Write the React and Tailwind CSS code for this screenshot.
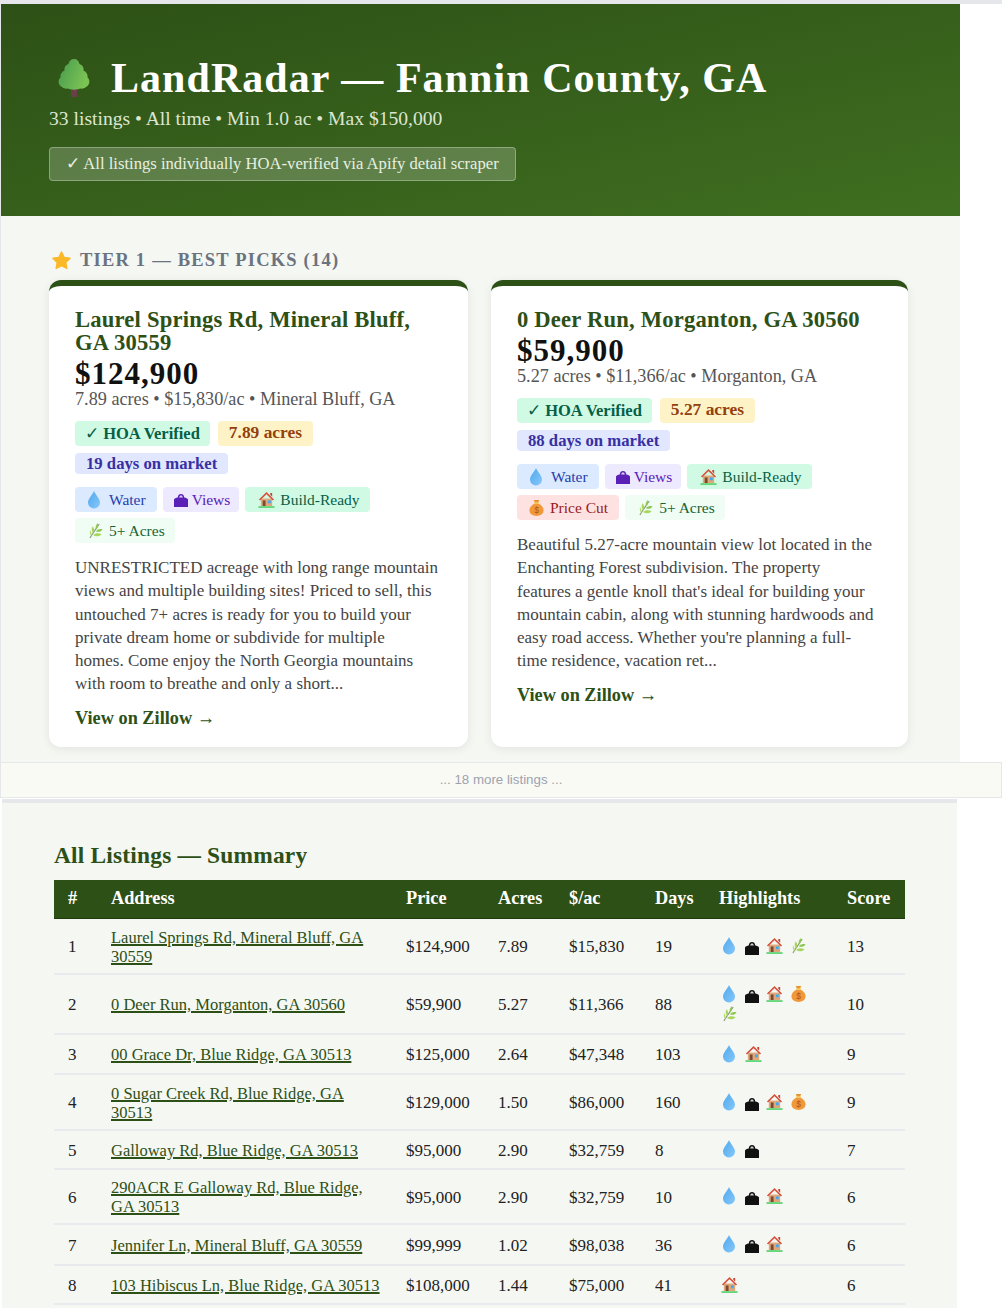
import React from 'react';

const Tree = () => (
  <svg viewBox="0 0 32 38" className="w-[32px] h-[38px] shrink-0">
    <defs>
      <linearGradient id="treeFill" x1="0" y1="0" x2="1" y2="0.4">
        <stop offset="0" stopColor="#459a4e" />
        <stop offset="1" stopColor="#7cc354" />
      </linearGradient>
    </defs>
    <rect x="13" y="30" width="6" height="8" fill="#6a4048" />
    <path d="M16 0c3 0 5 2 5.500 5 3 1 4.500 3.500 4 6.500 3 1.500 4.500 4 4 7 2.500 2 2.500 6 0 8.500-2 2-5 3-7.500 2.500-2 1.500-10 1.500-12 0-2.500.5-5.500-.5-7.500-2.500-2.500-2.500-2.500-6.500 0-8.500-.5-3 1-5.500 4-7-.5-3 1-5.500 4-6.500C11 2 13 0 16 0z" fill="url(#treeFill)" />
  </svg>
);

const Star = () => (
  <svg viewBox="0 0 20 20" className="w-[19px] h-[19px] shrink-0">
    <path d="M10 1l2.800 5.800 6.200.9-4.500 4.400 1.100 6.300L10 15.400l-5.600 3 1.100-6.300L1 7.700l6.200-.9z" fill="#fbb828" stroke="#fbb828" strokeWidth="1.500" strokeLinejoin="round" />
  </svg>
);

const Drop = () => (
  <svg viewBox="0 0 14 18" className="w-[14px] h-[18px] shrink-0">
    <defs>
      <linearGradient id="dropFill" x1="0" y1="0" x2="1" y2="1">
        <stop offset="0" stopColor="#4fa8ec" />
        <stop offset="1" stopColor="#86c8fb" />
      </linearGradient>
    </defs>
    <path d="M7 0c1 3 6 7.500 6 11.500a6 6 0 0 1-12 0C1 7.500 6 3 7 0z" fill="url(#dropFill)" />
  </svg>
);

const Bag = () => (
  <svg viewBox="0 0 17 15" className="w-[16px] h-[14px] shrink-0" fill="currentColor">
    <path d="M1 7C1.500 5.500 3 5 5 4.700 5.500 2 6.500 1 8.500 1s3 1 3.500 3.700c2 .3 3.500.8 4 2.300v8H1z" />
    <path d="M6.500 4.800c.3-1.500 1-2.200 2-2.200s1.700.7 2 2.200z" fill="#ffffff" opacity=".8" />
  </svg>
);

const House = () => (
  <svg viewBox="0 0 18 18" className="w-[17px] h-[17px] shrink-0">
    <rect x="3" y="8" width="12" height="8" fill="#e0a878" />
    <path d="M9 1L1 9l1.200 1L9 3.500l6.800 6.500L17 9z" fill="#d8503c" />
    <path d="M13 2h2v4l-2-2z" fill="#c24836" />
    <rect x="5" y="10" width="3" height="6" fill="#7a4a34" />
    <rect x="10.500" y="10" width="3" height="3" fill="#3fa9f5" />
    <rect x="0.500" y="16" width="17" height="2" fill="#66d67a" />
  </svg>
);

const MoneyBag = () => (
  <svg viewBox="0 0 16 18" className="w-[15px] h-[17px] shrink-0">
    <path d="M5 1h6l-1.500 3h-3z" fill="#e8942c" />
    <rect x="5.500" y="3.500" width="5" height="1.500" fill="#f6c84c" />
    <path d="M5.500 5h5c3 1.500 5 4 5 7 0 4-3.500 6-7.500 6S.5 16 .5 12c0-3 2-5.500 5-7z" fill="#f0983a" />
    <text x="8" y="15" textAnchor="middle" fontSize="9" fontFamily="Liberation Sans, sans-serif" fill="#a85a1c">$</text>
  </svg>
);

const Herb = () => (
  <svg viewBox="0 0 16 18" className="w-[15px] h-[17px] shrink-0" fill="none">
    <path d="M2 17C5 12 8 8 12 2" stroke="#87966f" strokeWidth="1.100" />
    <path d="M5.500 12C3.500 9.500 3.500 7 5 4.500c2 2.500 2 5 .5 7.500z" fill="#a6d65c" />
    <path d="M8.500 8C7.500 5.500 8.500 3 10.500 1c.8 2.500 0 5-2 7z" fill="#8cc850" />
    <path d="M5.500 14c2.500-2.500 5.500-2.500 9-1-2.500 2.500-5.500 3-9 1z" fill="#a6d65c" />
    <path d="M8.500 10c1.500-2.300 4-3 7-2.200-1.500 2.300-4 3.300-7 2.200z" fill="#8cc850" />
    <path d="M3.500 15C2 13 1.500 11 2.200 8.800c1.400 2 2 4 1.300 6.200z" fill="#b4dc6c" />
  </svg>
);

const chips = {
  Water: { Icon: Drop, cls: 'bg-[#dbeafe] text-[#1e40af] pl-[12px] pr-[11px] gap-[8px]' },
  Views: { Icon: Bag, cls: 'bg-[#ede9fe] text-[#5b21b6] pl-[10px] pr-[9px] gap-[3px]' },
  'Build-Ready': { Icon: House, cls: 'bg-[#d1fae5] text-[#065f46] pl-[13px] pr-[10px] gap-[5px]' },
  'Price Cut': { Icon: MoneyBag, cls: 'bg-[#fee2e2] text-[#991b1b] pl-[12px] pr-[11px] gap-[6px]' },
  '5+ Acres': { Icon: Herb, cls: 'bg-[#f0fdf4] text-[#166534] pl-[13px] pr-[10px] gap-[6px]' },
};

const cards = [
  {
    title: 'Laurel Springs Rd, Mineral Bluff, GA 30559',
    price: '$124,900',
    meta: '7.89 acres • $15,830/ac • Mineral Bluff, GA',
    acres: '7.89 acres',
    days: '19 days on market',
    chips: ['Water', 'Views', 'Build-Ready', '5+ Acres'],
    desc: [
      'UNRESTRICTED acreage with long range mountain',
      'views and multiple building sites! Priced to sell, this',
      'untouched 7+ acres is ready for you to build your',
      'private dream home or subdivide for multiple',
      'homes. Come enjoy the North Georgia mountains',
      'with room to breathe and only a short...',
    ],
  },
  {
    title: '0 Deer Run, Morganton, GA 30560',
    price: '$59,900',
    meta: '5.27 acres • $11,366/ac • Morganton, GA',
    acres: '5.27 acres',
    days: '88 days on market',
    chips: ['Water', 'Views', 'Build-Ready', 'Price Cut', '5+ Acres'],
    desc: [
      'Beautiful 5.27-acre mountain view lot located in the',
      'Enchanting Forest subdivision. The property',
      "features a gentle knoll that's ideal for building your",
      'mountain cabin, along with stunning hardwoods and',
      "easy road access. Whether you're planning a full-",
      'time residence, vacation ret...',
    ],
  },
];

const rows = [
  { n: 1, addr: 'Laurel Springs Rd, Mineral Bluff, GA 30559', price: '$124,900', acres: '7.89', per: '$15,830', days: 19, icons: 'WVBH', score: 13, h: 'h-[55px]' },
  { n: 2, addr: '0 Deer Run, Morganton, GA 30560', price: '$59,900', acres: '5.27', per: '$11,366', days: 88, icons: 'WVBPH', score: 10, h: 'h-[60px]' },
  { n: 3, addr: '00 Grace Dr, Blue Ridge, GA 30513', price: '$125,000', acres: '2.64', per: '$47,348', days: 103, icons: 'WB', score: 9, h: 'h-[40px]' },
  { n: 4, addr: '0 Sugar Creek Rd, Blue Ridge, GA 30513', price: '$129,000', acres: '1.50', per: '$86,000', days: 160, icons: 'WVBP', score: 9, h: 'h-[56px]' },
  { n: 5, addr: 'Galloway Rd, Blue Ridge, GA 30513', price: '$95,000', acres: '2.90', per: '$32,759', days: 8, icons: 'WV', score: 7, h: 'h-[39px]' },
  { n: 6, addr: '290ACR E Galloway Rd, Blue Ridge, GA 30513', price: '$95,000', acres: '2.90', per: '$32,759', days: 10, icons: 'WVB', score: 6, h: 'h-[55px]' },
  { n: 7, addr: 'Jennifer Ln, Mineral Bluff, GA 30559', price: '$99,999', acres: '1.02', per: '$98,038', days: 36, icons: 'WVB', score: 6, h: 'h-[41px]' },
  { n: 8, addr: '103 Hibiscus Ln, Blue Ridge, GA 30513', price: '$108,000', acres: '1.44', per: '$75,000', days: 41, icons: 'B', score: 6, h: 'h-[39px]' },
];

const rowIcons = {
  W: <span className="w-[20px] flex justify-center"><Drop /></span>,
  V: <span className="w-[17px] flex justify-center items-end text-[#111] h-[18px]"><Bag /></span>,
  B: <span className="w-[20px] flex justify-center"><House /></span>,
  P: <span className="w-[20px] flex justify-center"><MoneyBag /></span>,
  H: <span className="w-[20px] flex justify-center"><Herb /></span>,
};

function Card({ card }) {
  return (
    <div className="bg-white rounded-[12px] border-t-[6px] border-[#2d5016] px-[26px] pt-[22px] pb-[17px] shadow-[0_2px_10px_rgba(0,0,0,0.08)]">
      <h3 className="text-[22.600px] leading-[23px] font-bold text-[#2d5016] tracking-[0.2px]">{card.title}</h3>
      <div className="text-[31px] leading-[29px] font-bold tracking-[1px] text-[#111] mt-[5px]">{card.price}</div>
      <div className="text-[18.200px] leading-[22px] text-[#555]">{card.meta}</div>
      <div className="flex flex-wrap gap-x-[8px] gap-y-[7px] mt-[11px]">
        <span className="h-[25px] px-[10px] rounded-[4px] bg-[#d1fae5] text-[#065f46] text-[16.500px] font-bold leading-[25px]"><span className="font-normal">✓</span> HOA Verified</span>
        <span className="h-[25px] px-[11px] rounded-[4px] bg-[#fef3c7] text-[#92400e] text-[17.400px] font-bold leading-[23px]">{card.acres}</span>
        <span className="h-[21px] px-[11px] rounded-[4px] bg-[#e0e7ff] text-[#3730a3] text-[16.700px] font-bold leading-[21px]">{card.days}</span>
      </div>
      <div className="flex flex-wrap gap-x-[6px] gap-y-[6px] mt-[13px]">
        {card.chips.map((c) => {
          const { Icon, cls } = chips[c];
          return (
            <span key={c} className={`h-[25px] rounded-[4px] inline-flex items-center text-[15.500px] ${cls}`}>
              <Icon />
              {c}
            </span>
          );
        })}
      </div>
      <p className="text-[17px] leading-[23.300px] text-[#444] mt-[13px]">
        {card.desc.map((line) => (
          <span key={line} className="block whitespace-nowrap">{line}</span>
        ))}
      </p>
      <a className="block text-[18.300px] leading-[23px] font-bold text-[#2d5016] mt-[11px]">View on Zillow →</a>
    </div>
  );
}

export default function App() {
  return (
    <div className="w-[1002px] h-[1308px] overflow-hidden bg-white font-['Liberation_Serif',serif] border-t-[4px] border-[#e5e7eb]">
      <div className="w-[960px] bg-[#f4f7f2] border-l border-[#e5e7eb]">
        <header className="h-[212px] pl-[48px] pt-[52px] bg-gradient-to-br from-[#2d5016] to-[#3f6f20]">
          <h1 className="flex items-center gap-[21px] pl-[9px] text-[42px] leading-[44px] font-bold text-white tracking-[1.050px]">
            <Tree />
            LandRadar — Fannin County, GA
          </h1>
          <div className="text-[19.600px] leading-[26px] text-[#dce6d3] mt-[6px]">33 listings • All time • Min 1.0 ac • Max $150,000</div>
          <div className="inline-block mt-[15px] h-[34px] px-[16px] rounded-[4px] border border-white/30 bg-white/20 text-[16.650px] leading-[32px] text-[#e8efe2]">
            ✓ All listings individually HOA-verified via Apify detail scraper
          </div>
        </header>
        <section className="pl-[48px] pr-[51px] pt-[32px] pb-[15px]">
          <h2 className="flex items-center gap-[9px] pl-[3px] text-[18.500px] leading-[24px] font-bold uppercase tracking-[1.200px] text-[#6b7280] mb-[8px]">
            <Star />
            Tier 1 — Best Picks (14)
          </h2>
          <div className="grid grid-cols-[419px_417px] gap-[23px]">
            {cards.map((c) => <Card key={c.price} card={c} />)}
          </div>
        </section>
      </div>
      <div className="w-[1002px] h-[36px] bg-[#fafaf5] border border-[#e5e7eb] text-center font-['Liberation_Sans',sans-serif] text-[13.300px] leading-[33px] text-[#9ca3af]">
        ... 18 more listings ...
      </div>
      <div className="w-[955px] ml-[2px] mt-[1px] border-t-[4px] border-[#e5e7eb] bg-[#f5f7f3] pl-[52px] pr-[52px] pt-[37px] pb-[20px]">
        <h2 className="text-[23.400px] leading-[30px] font-bold text-[#2d5016] tracking-[0.200px] mb-[10px]">All Listings — Summary</h2>
        <table className="w-[851px] table-fixed border-collapse text-[17px] text-[#222]">
          <colgroup>
            <col className="w-[43px]" />
            <col className="w-[295px]" />
            <col className="w-[92px]" />
            <col className="w-[71px]" />
            <col className="w-[86px]" />
            <col className="w-[64px]" />
            <col className="w-[128px]" />
            <col className="w-[72px]" />
          </colgroup>
          <thead>
            <tr className="h-[39px] bg-[#2d5016] text-white text-left text-[18.300px] border-b border-[#1f3a0c]">
              <th className="pl-[14px] font-bold">#</th>
              <th className="pl-[14px] font-bold">Address</th>
              <th className="pl-[14px] font-bold">Price</th>
              <th className="pl-[14px] font-bold">Acres</th>
              <th className="pl-[14px] font-bold">$/ac</th>
              <th className="pl-[14px] font-bold">Days</th>
              <th className="pl-[14px] font-bold">Highlights</th>
              <th className="pl-[14px] font-bold">Score</th>
            </tr>
          </thead>
          <tbody>
            {rows.map((r) => (
              <tr key={r.n} className={`${r.h} border-b-2 border-[#e8eaee]`}>
                <td className="pl-[14px] pt-[2px]">{r.n}</td>
                <td className="pl-[14px] pr-[9px] pt-[2px] text-[16.500px] leading-[19px]"><a className="text-[#2d5016] underline decoration-[1.500px]">{r.addr}</a></td>
                <td className="pl-[14px] pt-[2px]">{r.price}</td>
                <td className="pl-[14px] pt-[2px]">{r.acres}</td>
                <td className="pl-[14px] pt-[2px]">{r.per}</td>
                <td className="pl-[14px] pt-[2px]">{r.days}</td>
                <td className="pl-[14px]">
                  <div className="flex flex-wrap w-[108px] gap-x-[4px] gap-y-[2px]">
                    {r.icons.split('').map((k, i) => <React.Fragment key={i}>{rowIcons[k]}</React.Fragment>)}
                  </div>
                </td>
                <td className="pl-[14px] pt-[2px]">{r.score}</td>
              </tr>
            ))}
          </tbody>
        </table>
      </div>
    </div>
  );
}
